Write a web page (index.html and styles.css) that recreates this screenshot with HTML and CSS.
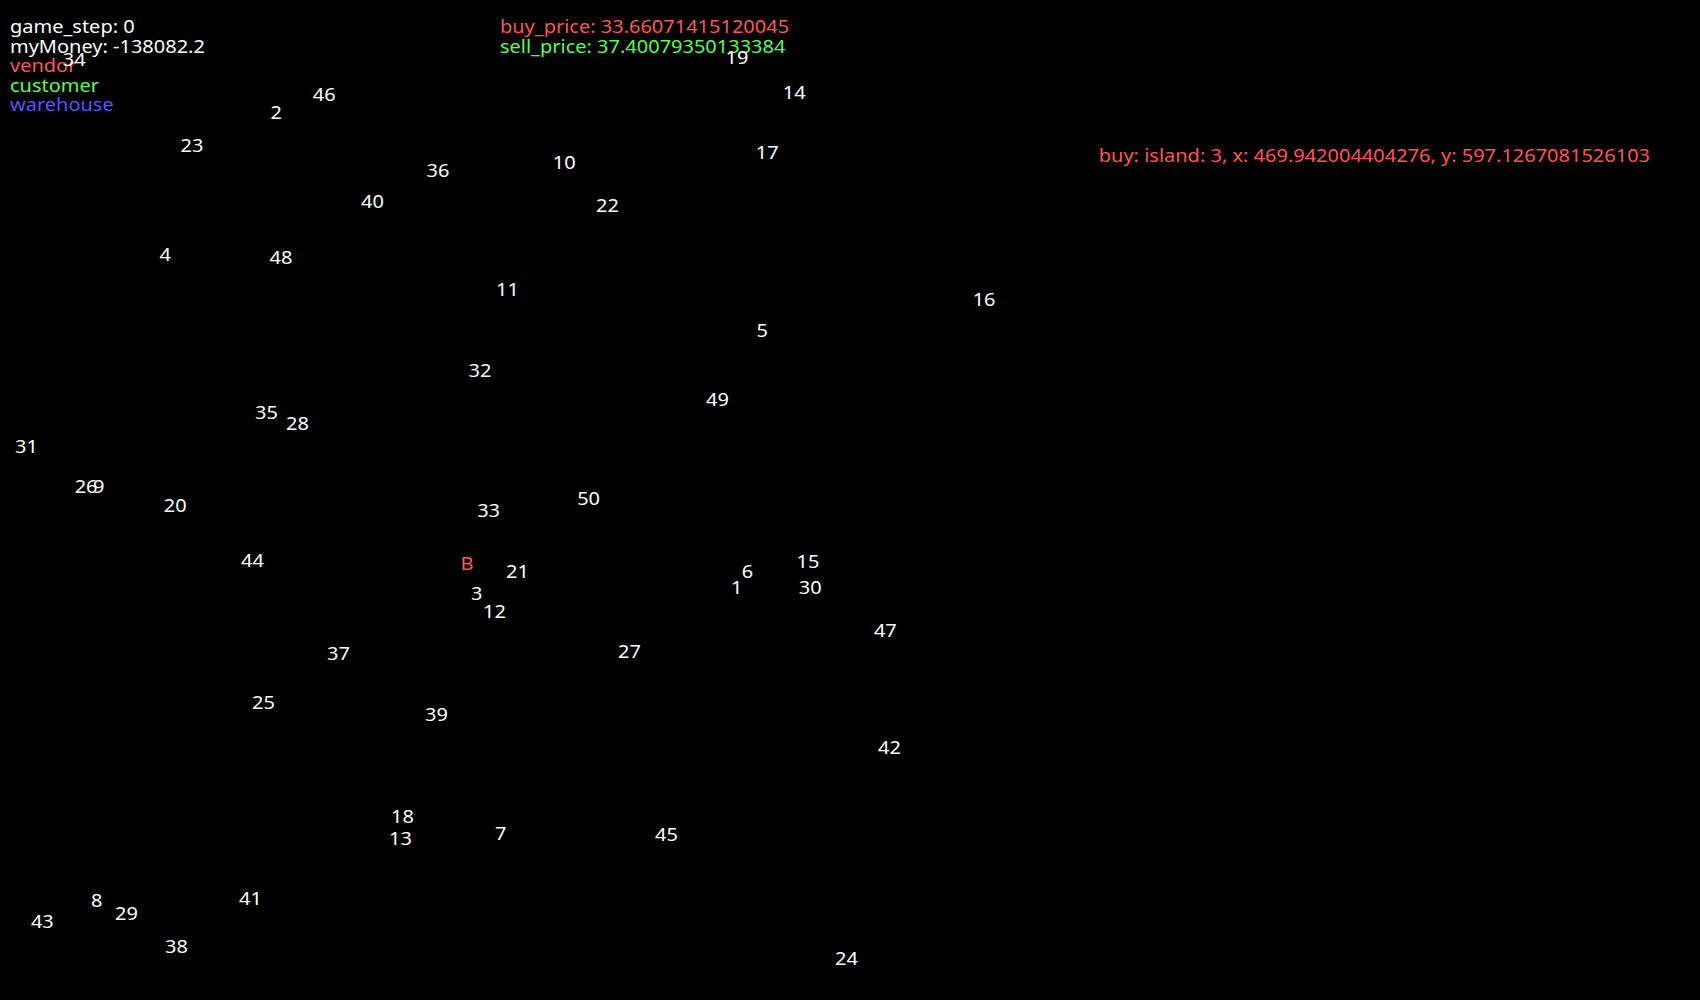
FILE: index.html
```html
<!DOCTYPE html>
<html>
<head>
<meta charset="utf-8">
<link rel="stylesheet" href="styles.css">
</head>
<body>
<svg class="board" width="1700" height="1000" viewBox="0 0 1700 1000">
  <g class="stretch">
    <g class="hud">
      <text class="w" x="9" y="33.5">game_step: 0</text>
      <text class="w" x="9" y="53">myMoney: -138082.2</text>
      <text class="r" x="9" y="72.5">vendor</text>
      <text class="g" x="9" y="92">customer</text>
      <text class="b" x="9" y="111.5">warehouse</text>
      <text class="r" x="450" y="33.5">buy_price: 33.66071415120045</text>
      <text class="g" x="450" y="53">sell_price: 37.40079350133384</text>
      <text class="r" x="989" y="162.5">buy: island: 3, x: 469.942004404276, y: 597.1267081526103</text>
    </g>
    <g class="nodes">
      <text x="56.5" y="66">34</text>
      <text x="243.5" y="119">2</text>
      <text x="281.5" y="101">46</text>
      <text x="162.5" y="152">23</text>
      <text x="383.9" y="177">36</text>
      <text x="497.5" y="169">10</text>
      <text x="653" y="64.5">19</text>
      <text x="704.5" y="99">14</text>
      <text x="680.2" y="159">17</text>
      <text x="536.5" y="212">22</text>
      <text x="325" y="208">40</text>
      <text x="143.6" y="261">4</text>
      <text x="242.6" y="264">48</text>
      <text x="446.5" y="296">11</text>
      <text x="875.5" y="306">16</text>
      <text x="680.9" y="337">5</text>
      <text x="421.7" y="377">32</text>
      <text x="635.5" y="406">49</text>
      <text x="229.5" y="419">35</text>
      <text x="257.5" y="430">28</text>
      <text x="13.5" y="453.5">31</text>
      <text x="67.2" y="493.5">26</text>
      <text x="83.8" y="493.5">9</text>
      <text x="147.5" y="512">20</text>
      <text x="429.5" y="517">33</text>
      <text x="519.5" y="505">50</text>
      <text x="217" y="567">44</text>
      <text class="r" x="414.6" y="570">B</text>
      <text x="455.5" y="578">21</text>
      <text x="424" y="600.5">3</text>
      <text x="434.8" y="618">12</text>
      <text x="667.6" y="578.5">6</text>
      <text x="717" y="568">15</text>
      <text x="658" y="594.5">1</text>
      <text x="719" y="594.5">30</text>
      <text x="786.6" y="637">47</text>
      <text x="294.4" y="660">37</text>
      <text x="556.3" y="658">27</text>
      <text x="226.8" y="709">25</text>
      <text x="382.6" y="721">39</text>
      <text x="790.3" y="754">42</text>
      <text x="352" y="823">18</text>
      <text x="350.2" y="845">13</text>
      <text x="445.6" y="840">7</text>
      <text x="589.6" y="841">45</text>
      <text x="215.2" y="905">41</text>
      <text x="82" y="907">8</text>
      <text x="103.6" y="920">29</text>
      <text x="27.8" y="928">43</text>
      <text x="148.6" y="953">38</text>
      <text x="751.6" y="965">24</text>
    </g>
  </g>
</svg>
</body>
</html>
```
FILE: styles.css
```css
html, body {
  margin: 0;
  padding: 0;
  background: #000;
  overflow: hidden;
}
.board {
  display: block;
  font-family: "Noto Sans", "Open Sans", sans-serif;
  font-size: 18px;
}
.stretch {
  transform: scale(1.111, 1);
  transform-origin: 0 0;
}
.board text {
  fill: #ffffff;
}
.board text.w { fill: #ffffff; }
.board text.r { fill: #ff5555; }
.board text.g { fill: #55ff55; }
.board text.b { fill: #5555ff; }
```
